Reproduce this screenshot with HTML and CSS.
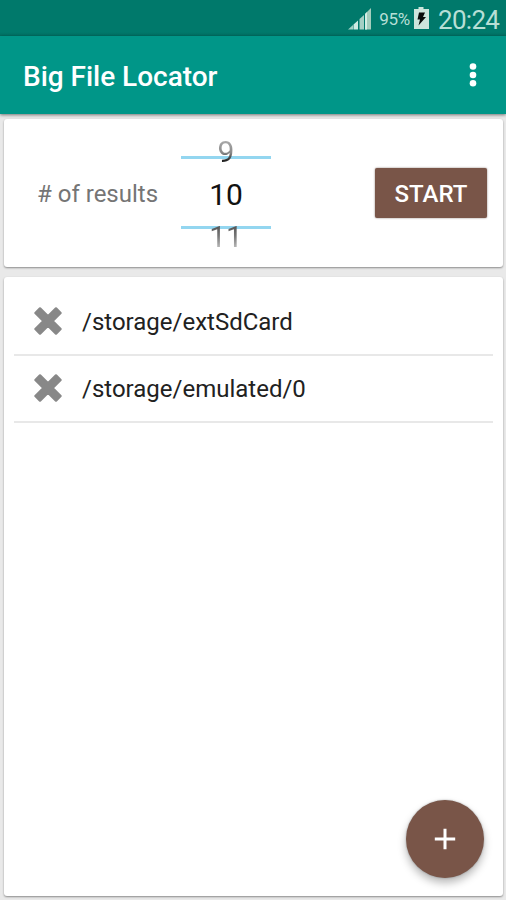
FILE: index.html
```html
<!DOCTYPE html>
<html lang="en">
<head>
<meta charset="utf-8">
<title>Big File Locator</title>
<link rel="stylesheet" href="styles.css">
</head>
<body>
<div class="status">
  <svg class="signal" width="24" height="24" viewBox="0 0 24 24">
    <path d="M0 23.500 5 19v4.500z" fill="#9fd0c4"/>
    <path d="M5.500 18.500l4.500-4v9H5.500z" fill="#cdeae2"/>
    <path d="M11.500 13l4.500-4v14.500h-4.500z" fill="#a5d0c5"/>
    <path d="M17 8l6-6v21.500h-6z" fill="#a5cdbd"/>
    <path d="M17 8l2-2v17.500h-2z" fill="#d4eee5"/>
  </svg>
  <span class="percent">95%</span>
  <svg class="battery" width="15" height="22" viewBox="0 0 15 22">
    <path d="M4.500 0h5v2H15v20H0V2h4.500z" fill="#cde5dc"/>
    <path d="M5 5.500h6L9 10h3L4.500 18.500l1.500-6H3.500z" fill="#080b0a"/>
  </svg>
  <span class="clock">20:24</span>
</div>
<header class="toolbar">
  <h1 class="title">Big File Locator</h1>
  <svg class="more" width="8" height="24" viewBox="0 0 8 24" fill="#fff"><circle cx="4" cy="3.500" r="3.300"/><circle cx="4" cy="12" r="3.300"/><circle cx="4" cy="20.300" r="3.300"/></svg>
</header>
<main class="content">
  <section class="card controls">
    <span class="label"># of results</span>
    <div class="picker">
      <span class="number previous">9</span>
      <span class="number current">10</span>
      <span class="number next">11</span>
    </div>
    <button class="start">START</button>
  </section>
  <section class="card folders">
    <div class="row">
      <svg class="remove" width="30" height="30" viewBox="0 0 30 30"><path d="M7 2.400 15 10.400l8-8L27.600 7l-8 8 8 8L23 27.600l-8-8-8 8L2.400 23l8-8-8-8z"/></svg>
      <span class="path">/storage/extSdCard</span>
    </div>
    <div class="row">
      <svg class="remove" width="30" height="30" viewBox="0 0 30 30"><path d="M7 2.400 15 10.400l8-8L27.600 7l-8 8 8 8L23 27.600l-8-8-8 8L2.400 23l8-8-8-8z"/></svg>
      <span class="path">/storage/emulated/0</span>
    </div>
    <button class="fab" aria-label="Add"><svg width="22" height="22" viewBox="0 0 22 22"><path d="M11 .8v20.400M.8 11h20.400" stroke="#fff" stroke-width="3"/></svg></button>
  </section>
</main>
</body>
</html>
```
FILE: styles.css
```css
*, *::before { box-sizing: border-box; }
body {
  margin: 0;
  height: 900px;
  display: flex;
  flex-direction: column;
  overflow: hidden;
  background: #e9e9e9;
  font-family: Roboto, "Liberation Sans", sans-serif;
}
button { border: 0; padding: 0; font-family: inherit; }
svg { display: block; flex: none; }
.status {
  height: 36px;
  flex: none;
  display: flex;
  align-items: flex-start;
  padding: 6px 6px 0 0;
  justify-content: flex-end;
  background: linear-gradient(#00796b 32px, #006f62);
  color: #b7dfd6;
}
.percent { font-size: 17px; line-height: 20px; margin: 3px 4px 0 7px; letter-spacing: -.3px; }
.battery { margin-top: 1px; }
.clock { font-size: 26px; line-height: 30px; margin: -1px 0 0 9px; width: 62px; letter-spacing: -.7px; white-space: nowrap; }
.toolbar {
  height: 78px;
  flex: none;
  display: flex;
  align-items: center;
  justify-content: space-between;
  padding: 0 29px 0 23px;
  background: #009688;
  color: #fff;
  box-shadow: 0 1px 3px rgba(0, 0, 0, .5);
  z-index: 1;
}
.title { margin: 4px 0 0; font-size: 28px; line-height: 34px; font-weight: 500; letter-spacing: -.02px; }
.content {
  flex: 1;
  display: flex;
  flex-direction: column;
  gap: 10px;
  padding: 5px 3px 4px 4px;
}
.card {
  background: #fff;
  border-radius: 3px;
  box-shadow: 0 1px 2px rgba(0, 0, 0, .4);
}
.controls {
  height: 148px;
  flex: none;
  display: flex;
  align-items: center;
  padding: 0 16px 0 33px;
}
.label { width: 144px; padding-top: 1px; font-size: 24px; color: #757575; white-space: nowrap; }
.picker {
  position: relative;
  width: 90px;
  height: 128px;
  margin-top: 4px;
  display: flex;
  flex-direction: column;
  align-items: center;
  justify-content: center;
}
.picker::before {
  content: "";
  position: absolute;
  top: 25px;
  left: 0;
  right: 0;
  height: 73px;
  border: solid #93d6f0;
  border-width: 3px 0;
}
.number { position: relative; font-size: 30px; line-height: 42.500px; color: #111; flex: none; }
.previous, .next { color: transparent; background-clip: text; -webkit-background-clip: text; }
.previous { background-image: linear-gradient(#aaa 10px, #888 22px, #111 31px); }
.next { background-image: linear-gradient(#555 10px, #777 20px, #bbb 32px); }
.start {
  width: 112px;
  height: 50px;
  margin-left: auto;
  padding-top: 1px;
  border-radius: 2px;
  background: #795548;
  color: #fff;
  font-size: 24px;
  font-weight: 500;
  box-shadow: 0 0 2px rgba(50, 20, 10, .6);
}
.folders { position: relative; flex: 1; padding: 12px 10px; }
.row {
  height: 67px;
  display: flex;
  align-items: center;
  padding-left: 19px;
  border-bottom: 2px solid #e8e8e8;
}
.remove { margin-top: -2px; fill: #888; stroke: #888; stroke-width: 2.400; stroke-linejoin: round; }
.path { padding-top: 1px; margin-left: 19px; font-size: 24px; color: #212121; white-space: nowrap; }
.fab {
  position: absolute;
  right: 19px;
  bottom: 18px;
  width: 78px;
  height: 78px;
  display: grid;
  place-items: center;
  border-radius: 50%;
  background: #795548;
  box-shadow: 0 5px 9px rgba(0, 0, 0, .28), 0 0 2px rgba(0, 0, 0, .3);
}
```
